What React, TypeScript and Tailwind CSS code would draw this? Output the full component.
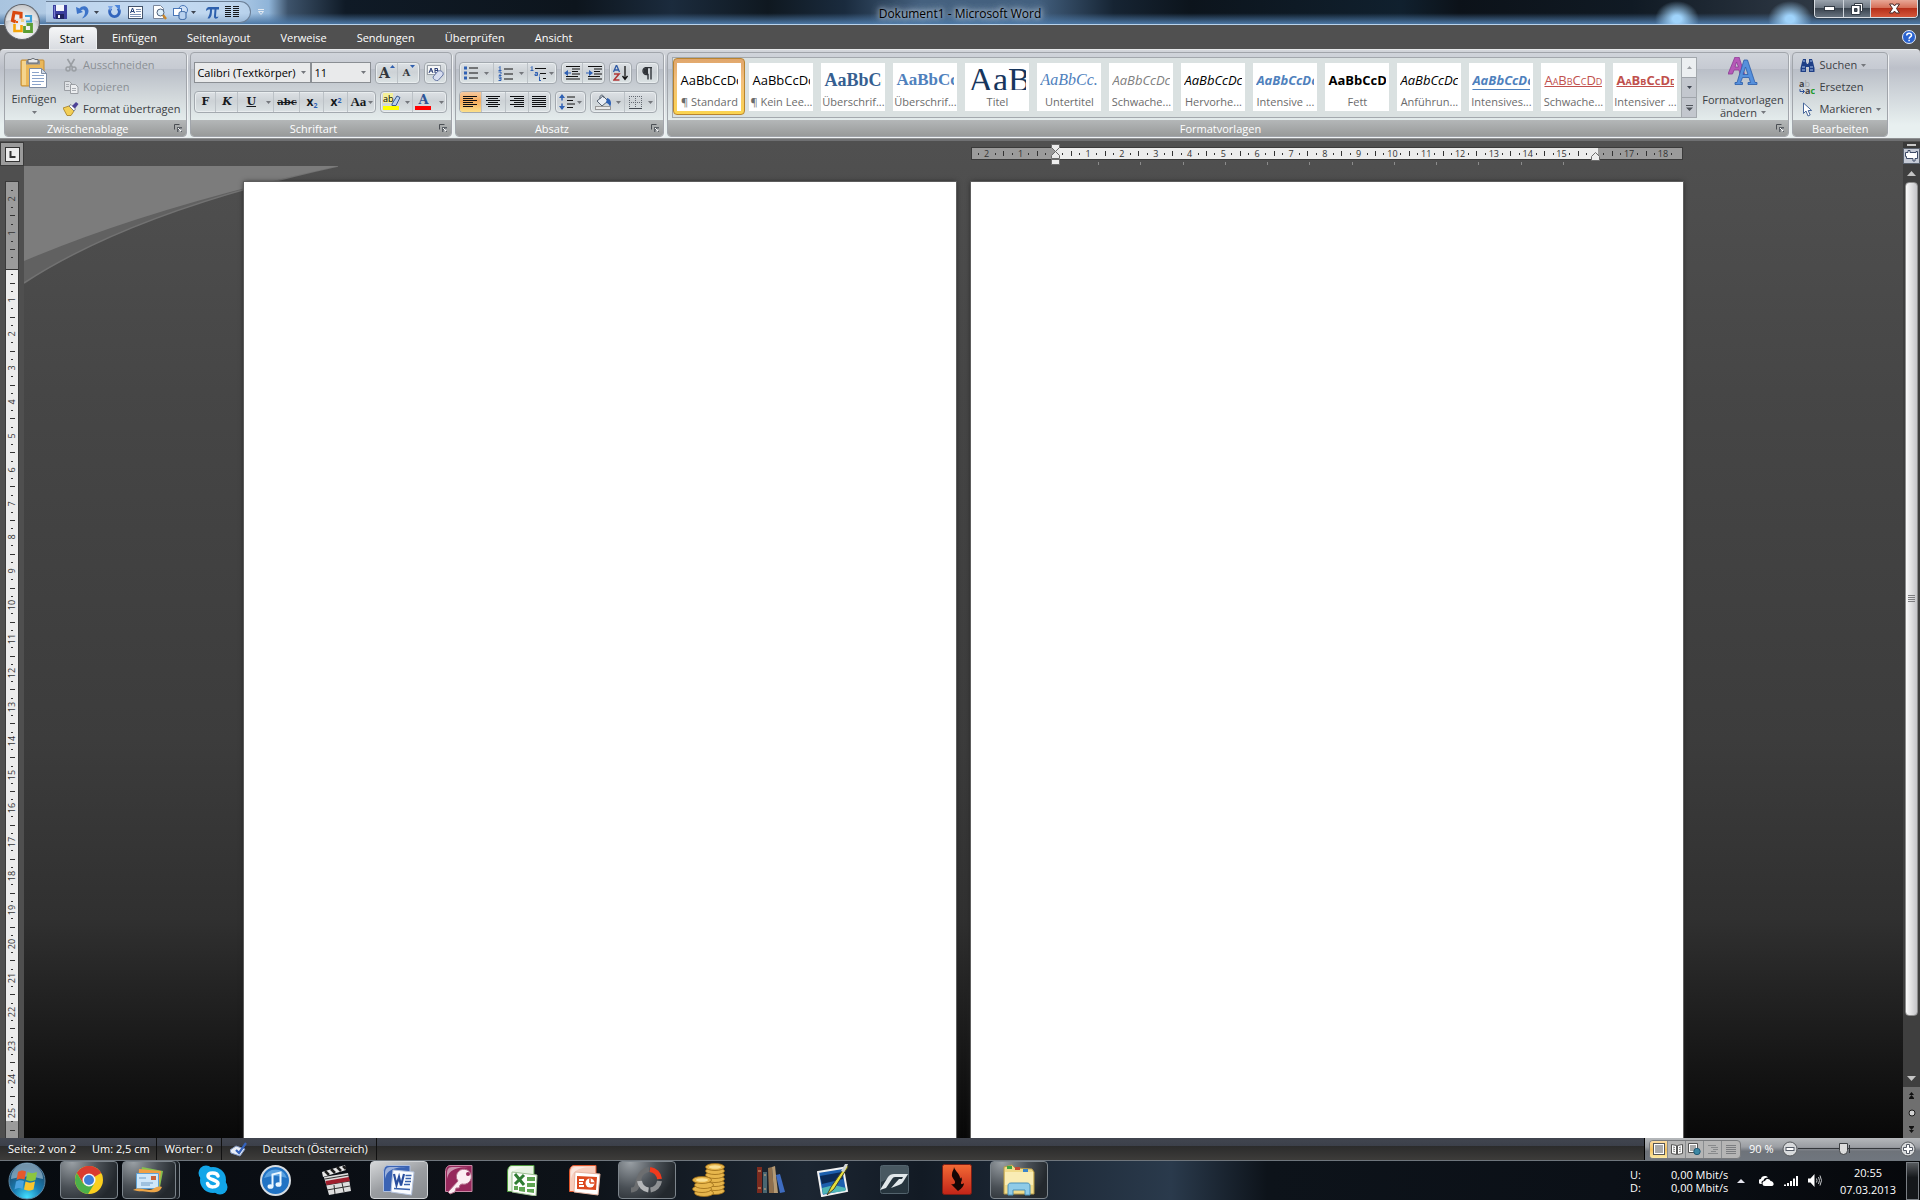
import React from 'react';

const SERIF = "font-['DejaVu_Serif']";

const Svg: React.FC<{ w?: number; h?: number; vb?: string; children: React.ReactNode }> = ({
  w = 16,
  h = 16,
  vb,
  children,
}) => (
  <svg width={w} height={h} viewBox={vb ?? `0 0 ${w} ${h}`} className="block shrink-0" aria-hidden="true">
    {children}
  </svg>
);

const Caret: React.FC<{ dark?: boolean }> = ({ dark }) => (
  <Svg w={5} h={3}>
    <path d="M0 0h5L2.5 3z" fill={dark ? '#3d4450' : '#74777c'} />
  </Svg>
);

/* ---------- title bar ---------- */

const OfficeButton = () => (
  <button type="button" aria-label="Office" className="absolute left-1 top-1 z-10 h-9 w-9">
    <Svg w={36} h={36}>
      <defs>
        <radialGradient id="orb" cx="50%" cy="75%" r="70%">
          <stop offset="0" stopColor="#ffffff" />
          <stop offset="0.6" stopColor="#dcdcde" />
          <stop offset="1" stopColor="#8b8d92" />
        </radialGradient>
      </defs>
      <circle cx="18" cy="18" r="17.5" fill="url(#orb)" stroke="#5e6269" />
      <path d="M2 17a16 16 0 0 1 32 0q-16-5-32 0z" fill="#fff" opacity="0.55" />
      <g fill="none" strokeWidth="3.2">
        <path d="M17 14.500V9.500l-7-1-1.500 8 3 1.200" stroke="#d9480f" />
        <path d="M14 18h-2.500" stroke="#e8590c" strokeWidth="2" />
        <path d="M21 12h6v5.500h-5" stroke="#3f9fd8" strokeWidth="2.200" />
        <path d="M10.500 20v7h7v-6" stroke="#f5a60b" strokeWidth="2.600" />
        <path d="M20.500 22v5.500h7v-7h-5" stroke="#5a9e35" strokeWidth="2.800" />
      </g>
      <path d="M17 15h3v3h-3z" fill="#f3c04a" opacity="0.6" />
    </Svg>
  </button>
);

const SaveIcon = () => (
  <Svg w={14} h={14}>
    <path d="M0 0h14v14H1l-1-1z" fill="#3b3f9e" />
    <path d="M3 0h8v6H3z" fill="#f3f5fb" />
    <path d="M3 9h8v5H3z" fill="#20235f" />
    <path d="M5 10h2v3H5z" fill="#fff" />
    <path d="M1 1h1v11H1z" fill="#7b80d0" />
  </Svg>
);

const UndoIcon = () => (
  <Svg w={13} h={14}>
    <path d="M0 2l1 7 6-2-2-1.500c2-2 4-1 4 1.500 0 3-1.500 4.500-3 6.500 4-1.500 6.500-4 6.500-7.500C12.500 1.500 7-1 3.500 3.500z" fill="#3d74c9" />
  </Svg>
);

const RedoIcon = () => (
  <Svg w={13} h={14}>
    <path d="M3 3.500a4.800 4.800 0 1 0 7 0" fill="none" stroke="#3265bd" strokeWidth="3" />
    <path d="M6.500 0H12v6z" fill="#4d86db" />
    <path d="M0 1h5L2 6z" fill="#79a4e5" />
  </Svg>
);

const TextBoxIcon = () => (
  <Svg w={15} h={13}>
    <rect x="0.500" y="0.500" width="14" height="12" fill="#fff" stroke="#43536b" />
    <path d="M2.500 7L4.500 2l2 5M3.200 5.500h2.600" fill="none" stroke="#1f3c74" />
    <path d="M8 3.500h5M8 5.500h5M2 8.500h11M2 10.500h11" stroke="#7d92b5" />
  </Svg>
);

const PreviewIcon = () => (
  <Svg w={15} h={15}>
    <path d="M1.500.5h7l3 3v10h-10z" fill="#fff" stroke="#7a869b" />
    <circle cx="8.500" cy="7.500" r="3.500" fill="#dff0fb" stroke="#4f617d" />
    <path d="M11 10l3 4" stroke="#c9862a" strokeWidth="2.400" />
  </Svg>
);

const ShapesIcon = () => (
  <Svg w={16} h={15}>
    <circle cx="10" cy="5" r="4.500" fill="#cfe0f5" stroke="#4a77b8" />
    <rect x="0.500" y="3.500" width="8" height="7" fill="#fff" stroke="#4a77b8" />
    <path d="M6 8c0-2 7-2 7 0v5c0 2-7 2-7 0z" fill="#b9d2ef" stroke="#33609f" />
  </Svg>
);

const PiIcon = () => (
  <Svg w={13} h={13}>
    <path d="M0 4C1 1 2 1 4 1h9v2.500h-2.500L10 10c0 1.500 1.500 1 2.500.5-1 3-5 3-4.500-.5l.5-6.500H6C6 8 5.500 11 3.500 12.500H1.500C3.500 9 4 7 4 3.500 2 3.500 1.500 3.500.5 5z" fill="#2d60ad" />
  </Svg>
);

const ColumnsIcon = () => (
  <Svg w={14} h={12}>
    <path d="M0 .5h6M0 2.500h6M0 4.500h6M0 6.500h6M0 8.500h6M0 10.500h6M8 .5h6M8 2.500h6M8 4.500h6M8 6.500h6M8 8.500h6M8 10.500h6" stroke="#15181d" />
  </Svg>
);

const IconButton: React.FC<{ label: string; className?: string; children: React.ReactNode }> = ({
  label,
  className = '',
  children,
}) => (
  <button type="button" aria-label={label} title={label} className={`flex items-center justify-center ${className}`}>
    {children}
  </button>
);

const TitleBar = () => (
  <header className="relative flex h-[25px] shrink-0 items-center border-b border-[#b9d3ec] bg-[#0e1720]">
    <div className="absolute inset-0 bg-[linear-gradient(90deg,#a9c4df_0,#c3d8ef_8%,#b5cfea_12%,#8fb4d8_14%,#3d536b_15%,#0f1a26_18%,#0d151d_30%,#1b2b3d_35%,#0f1820_40%,#1a2b3e_44%,#45617f_48%,#43607f_54%,#162433_58%,#0c141c_62%,#10202e_73%,#0c1219_76%,#101a24_85%,#2a3440_93%,#3d4752_100%)]" />
    <div className="absolute inset-0 bg-[radial-gradient(ellipse_22px_18px_at_1677px_19px,#9fd3fb_20%,transparent),radial-gradient(ellipse_22px_18px_at_1790px_19px,#9fd3fb_20%,transparent),linear-gradient(180deg,transparent_55%,#4c77a4)]" />
    <OfficeButton />
    <div className="relative ml-[46px] flex h-[22px] w-[205px] items-center rounded-r-full border border-l-0 border-[#6b7f97] bg-[#c5daf1]/60 pl-[7px]">
      <IconButton label="Speichern" className="w-3.5"><SaveIcon /></IconButton>
      <IconButton label="Rückgängig" className="ml-2 w-3.5"><UndoIcon /></IconButton>
      <IconButton label="Rückgängig Liste" className="ml-0.5 w-2.5"><Caret dark /></IconButton>
      <IconButton label="Wiederholen" className="ml-1.5 w-3.5"><RedoIcon /></IconButton>
      <IconButton label="Textfeld" className="ml-1.5 w-4"><TextBoxIcon /></IconButton>
      <IconButton label="Seitenansicht" className="ml-2 w-4"><PreviewIcon /></IconButton>
      <IconButton label="Formen" className="ml-1.5 w-4"><ShapesIcon /></IconButton>
      <IconButton label="Formen Liste" className="w-2"><Caret dark /></IconButton>
      <IconButton label="Formel" className="ml-2 w-3.5"><PiIcon /></IconButton>
      <IconButton label="Spalten" className="ml-1.5 w-3.5"><ColumnsIcon /></IconButton>
    </div>
    <IconButton label="Symbolleiste anpassen" className="relative ml-1.5 h-4 w-2">
      <Svg w={6} h={6}>
        <path d="M0 .5h6M.5 2.500h5L3 5.500z" stroke="#e4eaf1" fill="none" />
      </Svg>
    </IconButton>
    <h1 className="pointer-events-none absolute inset-x-0 top-1 text-center text-[12px] leading-5 text-black [text-shadow:0_0_4px_#c5d3e2,0_0_8px_#b5c6d8,0_0_8px_#b5c6d8]">
      Dokument1 - Microsoft Word
    </h1>
    <div className="absolute right-0.5 top-0 flex h-[18px] overflow-hidden rounded-b border border-t-0 border-[#d8dde3] shadow-[0_0_2px_#000]">
      <IconButton label="Minimieren" className="w-[29px] border-r border-[#cfd5dc] bg-[linear-gradient(180deg,#9aa3ad,#6b7580_50%,#3a444f_50%,#67727e)]">
        <Svg w={11} h={5}><rect x="0.500" y="0.500" width="10" height="4" fill="#fff" stroke="#333b45" /></Svg>
      </IconButton>
      <IconButton label="Verkleinern" className="w-[27px] border-r border-[#cfd5dc] bg-[linear-gradient(180deg,#9aa3ad,#6b7580_50%,#3a444f_50%,#67727e)]">
        <Svg w={12} h={12}>
          <path d="M3.500.5h8v8h-2v-6h-6z" fill="#fff" stroke="#333b45" />
          <path d="M.5 2.500h8.500v9H.5zM3.500 5.500v3h2.500v-3z" fillRule="evenodd" fill="#fff" stroke="#333b45" />
        </Svg>
      </IconButton>
      <IconButton label="Schließen" className="w-[46px] bg-[linear-gradient(180deg,#e8a796,#d46a52_50%,#b7301a_50%,#d4573a)]">
        <Svg w={11} h={11}>
          <path d="M.5 1h3.500l1.500 2L7 1h3.500L7.500 5.500l3 4.500H7L5.500 8 4 10H.5l3-4.500z" fill="#fff" stroke="#4d2a28" />
        </Svg>
      </IconButton>
    </div>
  </header>
);

/* ---------- ribbon ---------- */

const TABS = ['Start', 'Einfügen', 'Seitenlayout', 'Verweise', 'Sendungen', 'Überprüfen', 'Ansicht'];

const TabRow = () => (
  <nav className="flex h-6 shrink-0 items-end bg-[#505050] pl-[49px]">
    {TABS.map((tab, i) => (
      <button
        key={tab}
        type="button"
        className={
          i === 0
            ? 'h-[22px] w-12 rounded-t border border-b-0 border-[#eef1f3] bg-[linear-gradient(180deg,#f4f5f6,#d9dce1)] pr-0.5 text-[11px] leading-[22px] text-black'
            : 'h-[22px] px-[15px] text-[11px] leading-[22px] text-white'
        }
      >
        {tab}
      </button>
    ))}
    <IconButton label="Hilfe" className="mb-[5px] ml-auto mr-1">
      <Svg w={14} h={14}>
        <circle cx="7" cy="7" r="6.500" fill="#2a62cf" stroke="#e3ecfa" />
        <path d="M4.700 5.500c0-3 4.800-3 4.800-.3 0 1.700-2.400 1.800-2.400 3.500M7.100 9.800v1.400" fill="none" stroke="#fff" strokeWidth="1.500" />
      </Svg>
    </IconButton>
  </nav>
);

const Group: React.FC<{ title: string; launcher?: boolean; className?: string; children: React.ReactNode }> = ({
  title,
  launcher = true,
  className = '',
  children,
}) => (
  <section className="flex h-[85px] flex-col overflow-hidden rounded border border-[#a1a5ab] bg-[linear-gradient(180deg,#d0d4da_0,#c6cad2_16px,#b9bec7_16px,#d3d9dc_45px,#e6eeee_70px)] shadow-[1px_1px_0_#f0f2f4]">
    <div className={`flex flex-1 ${className}`}>{children}</div>
    <div className="relative h-4 bg-[linear-gradient(180deg,#b4b7b8,#989a9a)] text-center text-[11px] leading-[18px] text-white">
      <h2 className={launcher ? 'pr-4' : ''}>{title}</h2>
      {launcher && (
        <IconButton label={`${title} Optionen`} className="absolute right-1 top-1">
          <Svg w={8} h={8}>
            <path d="M.5 5.500v-5h5" fill="none" stroke="#4b4f54" />
            <path d="M3 3h5v5H3z" fill="#5b6066" />
            <path d="M4 4l3 3M7 4.500v2.500H4.500" stroke="#fff" fill="none" />
          </Svg>
        </IconButton>
      )}
    </div>
  </section>
);

const Cluster: React.FC<{ children: React.ReactNode }> = ({ children }) => (
  <div className="flex h-[22px] divide-x divide-[#bcc2c7] overflow-hidden rounded-sm border border-[#a3a9af] bg-[linear-gradient(180deg,#dde1e5,#cdd2d6_45%,#dbe2e4)] shadow-[inset_0_0_0_1px_#e9edef]">
    {children}
  </div>
);

const SmallButton: React.FC<{ icon: React.ReactNode; label: string; disabled?: boolean; caret?: boolean }> = ({
  icon,
  label,
  disabled,
  caret,
}) => (
  <button
    type="button"
    disabled={disabled}
    className={`flex h-[22px] items-center text-[11px] leading-4 ${disabled ? 'text-[#8b9095]' : 'text-[#3c4044]'}`}
  >
    <span className="mr-1 flex w-4 justify-center">{icon}</span>
    {label}
    {caret && <span className="ml-1"><Caret /></span>}
  </button>
);

const PasteIcon = () => (
  <Svg w={28} h={32}>
    <rect x="1" y="3" width="23" height="26" rx="1" fill="#eab759" stroke="#c38b32" />
    <path d="M2 4h4v24H2z" fill="#f5d48d" />
    <path d="M6 3.500h14v4H6z" fill="#8d9299" />
    <path d="M8 2.500h3a2.500 2.500 0 0 1 4 0h3v3.500H8z" fill="#e8eaed" stroke="#666b72" />
    <path d="M9.500 11.500h12l5 5v14h-17z" fill="#fff" stroke="#7f8da3" />
    <path d="M21.500 11.500v5h5z" fill="#cfd9e8" stroke="#7f8da3" />
    <path d="M12 15.500h7M12 18.500h12M12 21.500h12M12 24.500h12M12 27.500h9" stroke="#8aa3ca" />
  </Svg>
);

const CutIcon = () => (
  <Svg w={12} h={14}>
    <path d="M2.500 1l5 8.500M9.500 1l-5 8.500" stroke="#9a9ea3" strokeWidth="1.600" />
    <circle cx="3" cy="11" r="2" fill="none" stroke="#9a9ea3" strokeWidth="1.500" />
    <circle cx="9" cy="11" r="2" fill="none" stroke="#9a9ea3" strokeWidth="1.500" />
  </Svg>
);

const CopyIcon = () => (
  <Svg w={15} h={13}>
    <path d="M.5.5h5l2.500 2.500v6.500H.5z" fill="#dfe2e5" stroke="#9a9ea3" />
    <path d="M6.500 3.500h5l2.500 2.500v6.500H6.500z" fill="#eceef0" stroke="#9a9ea3" />
    <path d="M2 3.500h3M2 5.500h3M8 7.500h4M8 9.500h4" stroke="#a9adb2" />
  </Svg>
);

const BrushIcon = () => (
  <Svg w={16} h={14}>
    <path d="M0 6l6-2 5 5-3 4.500H4z" fill="#f2cf57" stroke="#a47d20" strokeWidth="0.800" />
    <path d="M6 4l2-1.500 4.500 4.500L11 9z" fill="#fff" stroke="#6c717a" strokeWidth="0.800" />
    <path d="M9 4l4-4 2.500 2L12 6.500z" fill="#4d4296" />
  </Svg>
);

const FONT_LIST = ['Calibri (Textkörper)', 'Cambria', 'Arial'];
const SIZE_LIST = ['11', '12', '14'];

const Combo: React.FC<{ id: string; label: string; options: string[]; width: string }> = ({ id, label, options, width }) => (
  <div className={`relative h-[21px] border border-[#8a8e93] bg-[#e9eaeb] ${width}`}>
    <label htmlFor={id} className="sr-only">{label}</label>
    <select id={id} className="block h-full w-full appearance-none bg-transparent pl-0.5 text-[11px] leading-4 text-black outline-none">
      {options.map(o => (
        <option key={o}>{o}</option>
      ))}
    </select>
    <span className="pointer-events-none absolute right-1 top-2"><Caret /></span>
  </div>
);

const GrowFont: React.FC<{ down?: boolean }> = ({ down }) => (
  <span className={`flex items-start font-bold text-[#33373d] ${SERIF} ${down ? 'text-[10px] leading-4' : 'text-[14px] leading-4'}`}>
    A
    <Svg w={5} h={4}><path d={down ? 'M0 0h5L2.500 3z' : 'M0 3h5L2.500 0z'} fill="#2f5fae" /></Svg>
  </span>
);

const ClearIcon = () => (
  <Svg w={17} h={16}>
    <rect x="0.500" y="0.500" width="13" height="9" fill="#f6f7f8" stroke="#9ba1a8" />
    <path d="M2 8l2-5 2 5M3 6h2.500M8 3v5M8 3.500h2.500v2H8h3v2.500H8" fill="none" stroke="#2c3f77" />
    <path d="M6 12l5-6c3-1 6 1 5 4l-5 5.500c-2 .5-5-1-5-3.500z" fill="#d8def0" stroke="#6575a4" />
  </Svg>
);

const HighlightIcon = () => (
  <Svg w={18} h={18}>
    <path d="M0 0h10v10H0z" fill="#f4f09a" />
    <path d="M0 13h16v4H0z" fill="#ffff00" />
    <path d="M9 11l5-8 3 1.500-4 8H9z" fill="#b8d0ee" stroke="#3b5a91" />
    <text x="0" y="9" fontSize="9" fontFamily="Open Sans" fill="#000">ab</text>
  </Svg>
);

const Lines: React.FC<{ rows: [number, number][] }> = ({ rows }) => (
  <Svg w={15} h={12}>
    {rows.map(([x, len], i) => (
      <path key={i} d={`M${x} ${i * 2 + 0.5}h${len}`} stroke="#0d0f12" />
    ))}
  </Svg>
);

const LEFT: [number, number][] = [[0, 14], [0, 10], [0, 14], [0, 10], [0, 14], [0, 10]];
const CENTER: [number, number][] = [[0, 14], [2, 10], [0, 14], [2, 10], [0, 14], [2, 10]];
const RIGHT: [number, number][] = [[0, 14], [4, 10], [0, 14], [4, 10], [0, 14], [4, 10]];
const FULL: [number, number][] = [[0, 14], [0, 14], [0, 14], [0, 14], [0, 14], [0, 14]];

const BulletsIcon = () => (
  <Svg w={14} h={14}>
    <path d="M0 .5h3v3H0zM0 5.500h3v3H0zM0 10.500h3v3H0z" fill="#2f61b4" />
    <path d="M5 2h9M5 7h9M5 12h9" stroke="#111" />
  </Svg>
);

const NumbersIcon = () => (
  <Svg w={15} h={15}>
    <path d="M1 1.500l1-1v4M.5 4.500h3M.5 6h2.500v1.500l-2 2h2.500M.5 11h2.500v3.500h-2.500M1 12.700h2" fill="none" stroke="#2f61b4" />
    <path d="M6 3h9M6 8h9M6 13h9" stroke="#111" />
  </Svg>
);

const MultiIcon = () => (
  <Svg w={17} h={15}>
    <path d="M1 1.500l1-1v4M.5 4.500h3M5 6.500h2.500v3H5v-1.500h2M9.500 10.500v4M9 14.500h2M9.500 8.500v1" fill="none" stroke="#2f61b4" />
    <path d="M5 2.500h11M10 7.500h6M13 12.500h3" stroke="#111" />
  </Svg>
);

const IndentIcon: React.FC<{ right?: boolean }> = ({ right }) => (
  <Svg w={16} h={14}>
    <path d="M2 .5h14M8 3h8M8 5.500h6M8 8h8M2 10.500h12M2 13h14" stroke="#111" />
    <path d={right ? 'M0 6.500h3V4l4 3-4 3V7.500H0z' : 'M7 6.500H4V4L0 7l4 3V7.500h3z'} fill="#2f61b4" />
  </Svg>
);

const SortIcon = () => (
  <Svg w={15} h={16}>
    <path d="M.5 7L3.500 0l3 7M1.500 5h4" fill="none" stroke="#2f5aa5" strokeWidth="1.300" />
    <path d="M1 9h5l-5 6h5.500" fill="none" stroke="#b03636" strokeWidth="1.600" />
    <path d="M12 1v13M9.500 11l2.500 3.500 2.500-3.500" fill="none" stroke="#111" strokeWidth="1.300" />
  </Svg>
);

const PilcrowIcon = () => (
  <Svg w={11} h={13}>
    <path d="M10 .5H4.500a3.500 3.500 0 0 0 0 7H6V12.500M9 .5v12" fill="none" stroke="#2f3338" strokeWidth="1.400" />
    <path d="M6 1H4.500a3 3 0 0 0 0 6H6z" fill="#2f3338" />
  </Svg>
);

const SpacingIcon = () => (
  <Svg w={16} h={16}>
    <path d="M3 1v5.500M3 15V9.500" stroke="#2f61b4" strokeWidth="1.500" />
    <path d="M0 4l3-4 3 4zM0 12l3 4 3-4z" fill="#2f61b4" />
    <path d="M8 3h8M8 6.500h6M8 10h8M8 13.500h6" stroke="#111" />
  </Svg>
);

const BucketIcon = () => (
  <Svg w={17} h={16}>
    <path d="M2 7l6-5 5 5-6 5z" fill="#e9eef5" stroke="#55606f" />
    <path d="M5 5C4 0 9 0 9 4" fill="none" stroke="#55606f" />
    <path d="M12 4c4 1 5 5 3 9-1-3-2-4-4-4z" fill="#2f61b4" />
    <rect x="0.500" y="12.500" width="15" height="3" fill="#e9e9e9" stroke="#999" />
  </Svg>
);

const BordersIcon = () => (
  <Svg w={13} h={13}>
    <path d="M.5 0v13M12.500 0v12M6.500 0v12M0 .5h13M0 6.500h13" stroke="#646a72" strokeDasharray="1 1" />
    <path d="M0 12.500h13" stroke="#444a52" />
  </Svg>
);

const CALIBRI = "text-[13px] leading-4 font-['Open_Sans']";

const STYLES: { name: string; sample: string; look: string }[] = [
  { name: '¶ Standard', sample: 'AaBbCcDc', look: `${CALIBRI} text-black` },
  { name: '¶ Kein Lee...', sample: 'AaBbCcDc', look: `${CALIBRI} text-black` },
  { name: 'Überschrif...', sample: 'AaBbCc', look: "text-[18px] leading-4 font-bold text-[#365f91] font-['Liberation_Serif']" },
  { name: 'Überschrif...', sample: 'AaBbCc', look: "text-[17px] leading-4 font-bold text-[#4f81bd] font-['Liberation_Serif']" },
  { name: 'Titel', sample: 'AaB', look: "text-[34px] leading-4 text-[#17365d] font-['Liberation_Serif']" },
  { name: 'Untertitel', sample: 'AaBbCc.', look: "text-[16px] leading-4 italic text-[#4f81bd] font-['Liberation_Serif']" },
  { name: 'Schwache...', sample: 'AaBbCcDc', look: `${CALIBRI} italic text-[#808080]` },
  { name: 'Hervorhe...', sample: 'AaBbCcDc', look: `${CALIBRI} italic text-black` },
  { name: 'Intensive ...', sample: 'AaBbCcDc', look: `${CALIBRI} italic font-bold text-[#4f81bd]` },
  { name: 'Fett', sample: 'AaBbCcDc', look: `${CALIBRI} font-bold text-black` },
  { name: 'Anführun...', sample: 'AaBbCcDc', look: `${CALIBRI} italic text-black` },
  { name: 'Intensives...', sample: 'AaBbCcDc', look: `${CALIBRI} italic font-bold text-[#4f81bd] underline underline-offset-4` },
  { name: 'Schwache...', sample: 'AaBbCcDd', look: `${CALIBRI} [font-variant:small-caps] text-[#c0504d] underline` },
  { name: 'Intensiver ...', sample: 'AaBbCcDd', look: `${CALIBRI} [font-variant:small-caps] font-bold text-[#c0504d] underline` },
];

const Gallery = () => (
  <div className="mt-1 flex h-[61px] border border-[#a3a8ad] bg-[#dae1e1]">
    {STYLES.map((s, i) => (
      <button
        key={i}
        type="button"
        className={`flex h-[57px] w-[72px] items-center justify-center ${
          i === 0 ? 'rounded-sm border border-[#b9842f] bg-[linear-gradient(180deg,#e0a66c,#f3c07c_40%,#fbd44f)]' : ''
        }`}
      >
        <span className="flex h-12 w-16 flex-col bg-white pt-[3px]">
          <span className="mx-[3px] flex h-6 items-end overflow-hidden pb-0.5">
            <span className={`block whitespace-nowrap ${s.look}`}>{s.sample}</span>
          </span>
          <span className="mt-1 whitespace-nowrap text-center text-[11px] leading-4 text-[#6b6b6b]">{s.name}</span>
        </span>
      </button>
    ))}
    <div className="flex w-[15px] flex-col divide-y divide-[#9fa4aa] border-l border-[#a3a8ad] bg-[linear-gradient(180deg,#eceff1_33%,#c3c7ce_33%)]">
      <IconButton label="Nach oben" className="flex-1"><Svg w={5} h={3}><path d="M0 3h5L2.500 0z" fill="#9b9ea3" /></Svg></IconButton>
      <IconButton label="Nach unten" className="flex-1"><Caret dark /></IconButton>
      <IconButton label="Weitere" className="flex-1">
        <Svg w={7} h={6}><path d="M0 0h7v1H0zM0 2.500h7L3.500 6z" fill="#4f545b" /></Svg>
      </IconButton>
    </div>
  </div>
);

const ChangeStylesIcon = () => (
  <Svg w={30} h={28}>
    <path d="M7 0h4l5.500 17H12l-1-4H6l-1.500 4H0zM8.500 5L7 10h3.500z" fill="#b659b8" stroke="#8a3c93" strokeWidth="0.800" />
    <path d="M16 3h3.500L27 25.500h2V27.500H20V25.500h2.500L21 20.500h-6.500L12.500 25.500h2V27.500H7V25.500h2zM17.500 10l-2.500 7.500h5z" fill="#5690dc" stroke="#2a5ca8" strokeWidth="0.800" />
  </Svg>
);

const SearchIcon = () => (
  <Svg w={15} h={13}>
    <path d="M2 3l1-3h3v3l1 2h1l1-2V0h3l1 3 1.500 6v4H9V8H6v5H.5V9z" fill="#1f3f86" />
    <path d="M2 8h3M10 8h3M3 2h2M10 2h2M2 11h3M10 11h3" stroke="#a9c3ec" />
  </Svg>
);

const ReplaceIcon = () => (
  <Svg w={16} h={15}>
    <text x="0" y="7" fontSize="9" fontWeight="700" fontFamily="Open Sans" fill="#3f4347">
      a<tspan fontWeight="400" fill="#a0a4a8">b</tspan>
    </text>
    <text x="6" y="14" fontSize="9" fontWeight="700" fontFamily="Open Sans" fill="#3f4347">
      a<tspan fill="#1e9a2b">c</tspan>
    </text>
    <path d="M1 9v2.500h4M3.500 9.500l2 2-2 2" fill="none" stroke="#2b4f96" />
  </Svg>
);

const PointerIcon = () => (
  <Svg w={11} h={15}>
    <path d="M1.500 1v10.500l2.500-2.500 2 5 2.200-1-2-4.500h3.500z" fill="#fff" stroke="#47679b" />
  </Svg>
);

const Ribbon = () => (
  <div className="shrink-0 rounded-t border-t border-[#e6e8ea] bg-[linear-gradient(180deg,#d3d6db,#bcc0c9_18px,#e8f0f0_75px)] shadow-[0_1px_0_#8e9092,0_3px_0_#6f7072]">
    <div className="flex h-[88px] items-start gap-[3px] pl-1 pt-0.5">
      <Group title="Zwischenablage" className="pl-[3px] pr-1.5">
        <button type="button" className="mr-[3px] mt-1 flex w-[52px] flex-col items-center text-[11px] leading-4 text-[#3c4044]">
          <PasteIcon />
          <span className="mt-0.5">Einfügen</span>
          <span className="mt-1"><Caret /></span>
        </button>
        <div className="flex flex-col pt-px">
          <SmallButton icon={<CutIcon />} label="Ausschneiden" disabled />
          <SmallButton icon={<CopyIcon />} label="Kopieren" disabled />
          <SmallButton icon={<BrushIcon />} label="Format übertragen" />
        </div>
      </Group>

      <Group title="Schriftart" className="flex-col gap-[7px] pl-[3px] pr-1 pt-[9px]">
        <div className="flex gap-1">
          <div className="flex">
            <Combo id="font" label="Schriftart" options={FONT_LIST} width="w-[117px]" />
            <Combo id="size" label="Schriftgrad" options={SIZE_LIST} width="w-[60px]" />
          </div>
          <Cluster>
            <IconButton label="Schriftart vergrößern" className="w-[22px]"><GrowFont /></IconButton>
            <IconButton label="Schriftart verkleinern" className="w-[21px]"><GrowFont down /></IconButton>
          </Cluster>
          <Cluster>
            <IconButton label="Formatierung löschen" className="w-[21px]"><ClearIcon /></IconButton>
          </Cluster>
        </div>
        <div className={`flex gap-1 text-[11px] leading-5 text-[#16191d] ${SERIF}`}>
          <Cluster>
            <button type="button" className="w-[21px] font-bold">F</button>
            <button type="button" className="w-[22px] font-bold italic">K</button>
            <button type="button" className="flex w-9 items-center gap-2.5 pl-2">
              <span className="font-bold underline">U</span><Caret />
            </button>
            <button type="button" className="w-[26px] text-[10px] font-bold line-through">abc</button>
            <button type="button" className="w-6 text-[12px] font-bold font-['Open_Sans']">x<sub className="text-[7px] text-[#2f61b4]">2</sub></button>
            <button type="button" className="w-6 text-[12px] font-bold font-['Open_Sans']">x<sup className="text-[7px] text-[#2f61b4]">2</sup></button>
            <button type="button" className="flex w-[27px] items-center justify-center gap-0.5 font-['Liberation_Serif'] text-[13px] font-bold">
              Aa<Caret />
            </button>
          </Cluster>
          <Cluster>
            <button type="button" aria-label="Hervorheben" className="flex w-8 items-center justify-center gap-1"><HighlightIcon /><Caret /></button>
            <button type="button" className="flex w-[33px] items-center justify-center gap-2">
              <span className="flex h-4 w-4 justify-center border-b-4 border-[#ff0000] text-[13px] font-bold leading-3 text-[#2f5597]">A</span>
              <Caret />
            </button>
          </Cluster>
        </div>
      </Group>

      <Group title="Absatz" className="flex-col gap-[7px] pl-[3px] pr-1 pt-[9px]">
        <div className="flex gap-1">
          <Cluster>
            <button type="button" aria-label="Aufzählung" className="flex w-[34px] items-center justify-center gap-1.5"><BulletsIcon /><Caret /></button>
            <button type="button" aria-label="Nummerierung" className="flex w-[34px] items-center justify-center gap-1.5"><NumbersIcon /><Caret /></button>
            <button type="button" aria-label="Liste mit mehreren Ebenen" className="flex w-[28px] items-center justify-center gap-0.5"><MultiIcon /><Caret /></button>
          </Cluster>
          <Cluster>
            <IconButton label="Einzug verkleinern" className="w-[21px]"><IndentIcon /></IconButton>
            <IconButton label="Einzug vergrößern" className="w-[21px]"><IndentIcon right /></IconButton>
          </Cluster>
          <Cluster>
            <IconButton label="Sortieren" className="w-[21px]"><SortIcon /></IconButton>
          </Cluster>
          <Cluster>
            <IconButton label="Absatzmarken" className="w-[21px]"><PilcrowIcon /></IconButton>
          </Cluster>
        </div>
        <div className="flex gap-1">
          <Cluster>
            <IconButton label="Linksbündig" className="w-[22px] bg-[linear-gradient(180deg,#f5c9a0,#f5ab5c_45%,#fbe08a)]"><Lines rows={LEFT} /></IconButton>
            <IconButton label="Zentriert" className="w-6"><Lines rows={CENTER} /></IconButton>
            <IconButton label="Rechtsbündig" className="w-[23px]"><Lines rows={RIGHT} /></IconButton>
            <IconButton label="Blocksatz" className="w-[21px]"><Lines rows={FULL} /></IconButton>
          </Cluster>
          <Cluster>
            <button type="button" aria-label="Zeilenabstand" className="flex w-[29px] items-center justify-center gap-0.5"><SpacingIcon /><Caret /></button>
          </Cluster>
          <Cluster>
            <button type="button" aria-label="Schattierung" className="flex w-[34px] items-center justify-center gap-1"><BucketIcon /><Caret /></button>
            <button type="button" aria-label="Rahmen" className="flex w-[31px] items-center justify-center gap-1.5"><BordersIcon /><Caret /></button>
          </Cluster>
        </div>
      </Group>

      <Group title="Formatvorlagen" className="gap-1 px-1">
        <Gallery />
        <button type="button" className="mt-1 flex w-[83px] flex-col items-center text-[11px] leading-[13px] text-[#3c4044]">
          <ChangeStylesIcon />
          <span className="mt-2">Formatvorlagen</span>
          <span className="flex items-center gap-1">ändern <Caret /></span>
        </button>
      </Group>

      <Group title="Bearbeiten" launcher={false} className="flex-col pl-1.5 pr-1.5 pt-px">
        <SmallButton icon={<SearchIcon />} label="Suchen" caret />
        <SmallButton icon={<ReplaceIcon />} label="Ersetzen" />
        <SmallButton icon={<PointerIcon />} label="Markieren" caret />
      </Group>
    </div>
  </div>
);

/* ---------- rulers and document ---------- */

// one mark per quarter centimetre, zero sits 2.5 cm inside the sheet
const marks = (count: number) => Array.from({ length: count }, (_, i) => i + 1 - 10);

const HorizontalRuler = () => (
  <div className="relative flex h-[13px] w-[712px] items-center border border-[#3a3a3a] bg-[linear-gradient(90deg,#9b9b9b_84px,#ececec_84px,#ececec_626px,#9b9b9b_626px)] pl-0.5 pr-1.5 text-[9px] leading-3 text-[#333]">
    {marks(83).map(m => (
      <span key={m} className="flex w-0 flex-1 justify-center">
        {m === 0 || m === 64 ? '' : m % 4 === 0 ? (
          <span>{Math.abs(m / 4)}</span>
        ) : m % 2 === 0 ? (
          <span className="h-[5px] w-px bg-[#333]" />
        ) : (
          <span className="h-0.5 w-px bg-[#333]" />
        )}
      </span>
    ))}
    <span className="absolute -top-1 left-[79px]">
      <Svg w={10} h={22}>
        <path d="M.5.5h8v3l-4 4-4-4zM.5 14.500v-3l4-4 4 4v3zM.5 15.500h8v5h-8z" fill="#ededed" stroke="#6c6c6c" />
      </Svg>
    </span>
    <span className="absolute left-[619px] top-1">
      <Svg w={10} h={9}><path d="M.5 8.500v-4l4-4 4 4v4z" fill="#ededed" stroke="#6c6c6c" /></Svg>
    </span>
    <div className="absolute left-[84px] top-3.5 flex w-[508px] justify-between pl-[42px]">
      {Array.from({ length: 12 }, (_, i) => (
        <span key={i} className="h-[3px] w-px bg-[#8b8b8b]" />
      ))}
    </div>
  </div>
);

const VerticalRuler = () => (
  <div className="ml-[5px] mt-[15px] h-[1007px] w-3.5 border border-[#3a3a3a] bg-[linear-gradient(180deg,#9b9b9b_87px,#333_87px,#333_88px,#ececec_88px,#ececec_939px,#9b9b9b_939px)] pt-1">
    <div className="flex h-[1000px] flex-col text-[9px] leading-3 text-[#333]">
      {marks(118).map(m => (
        <span key={m} className="flex h-0 flex-1 items-center justify-center">
          {m === 0 ? '' : m % 4 === 0 ? (
            <span className="-rotate-90">{Math.abs(m / 4)}</span>
          ) : m % 2 === 0 ? (
            <span className="h-px w-[5px] bg-[#333]" />
          ) : (
            <span className="h-px w-0.5 bg-[#333]" />
          )}
        </span>
      ))}
    </div>
  </div>
);

const Swoosh = () => (
  <svg width="316" height="120" viewBox="0 0 316 120" className="absolute left-0 top-0" aria-hidden="true">
    <path d="M0 0H314Q110 45 0 117z" fill="#616161" />
    <path d="M314 0Q110 45 0 117" fill="none" stroke="#727272" strokeWidth="1.500" />
    <path d="M0 0H314Q130 40 0 95z" fill="#7c7c7c" />
  </svg>
);

const Sheet = () => (
  <article className="relative h-[1007px] w-[712px] shrink-0 bg-white shadow-[0_0_0_1px_#5d5d5d,0_0_5px_#222]" />
);

const ScrollBar = () => (
  <aside className="flex w-[17px] shrink-0 flex-col bg-[#3f3f3f]">
    <div className="flex h-1.5 items-center justify-center bg-[#3a3a3a]"><span className="h-0.5 w-[9px] bg-[#c9c9c9]" /></div>
    <IconButton label="Lineal" className="h-4 border border-[#5c6470] bg-[#c6cbd6]">
      <Svg w={13} h={12}>
        <path d="M.5 2.500h2.500v-2h2v2h6v-1h1.500v7H10v2.500H8v-2.500H1.500v-2h-1z" fill="#fff" stroke="#3d4a66" />
      </Svg>
    </IconButton>
    <IconButton label="Bild auf" className="h-[18px]">
      <Svg w={9} h={5}><path d="M0 5h9L4.500 0z" fill="#c4c4c4" /></Svg>
    </IconButton>
    <div className="flex flex-1 flex-col">
      <div className="mx-0.5 flex h-[94%] items-center justify-center rounded-sm border border-[#8c8c8c] bg-[linear-gradient(90deg,#fafafa,#dcdcde_55%,#c4c4c8)]">
        <Svg w={7} h={7}><path d="M0 .5h7M0 2.500h7M0 4.500h7M0 6.500h7" stroke="#7d7d80" /></Svg>
      </div>
    </div>
    <IconButton label="Bild ab" className="h-[18px]">
      <Svg w={9} h={5}><path d="M0 0h9L4.500 5z" fill="#c4c4c4" /></Svg>
    </IconButton>
    <div className="flex h-[51px] flex-col bg-[#6f6f6f]">
      <IconButton label="Vorherige Seite" className="flex-1">
        <Svg w={5} h={7}><path d="M0 3l2.500-3L5 3zM0 6l2.500-3L5 6zM0 6h5v1H0z" fill="#111" /></Svg>
      </IconButton>
      <IconButton label="Browseobjekt" className="flex-1">
        <Svg w={8} h={8}><circle cx="4" cy="4" r="3" fill="#d2d2d2" stroke="#1c1c1c" /></Svg>
      </IconButton>
      <IconButton label="Nächste Seite" className="flex-1">
        <Svg w={5} h={7}><path d="M0 4l2.500 3L5 4zM0 1l2.500 3L5 1zM0 0h5v1H0z" fill="#111" /></Svg>
      </IconButton>
    </div>
  </aside>
);

const Workspace = () => (
  <main className="mt-1 flex min-h-0 flex-1 overflow-hidden bg-[#4f4f4f]">
    <div className="w-6 shrink-0">
      <button type="button" aria-label="Tabstopp" className="flex h-6 w-6 items-center justify-center border border-[#3b3b3b] bg-[#9b9b9b]">
        <Svg w={15} h={15}>
          <rect x="0.500" y="0.500" width="14" height="14" fill="#ededed" stroke="#333" />
          <path d="M5.500 4v6h5" fill="none" stroke="#333" strokeWidth="2" />
        </Svg>
      </button>
      <VerticalRuler />
    </div>
    <div className="flex min-w-0 flex-1 flex-col bg-[linear-gradient(180deg,#505050_0,#464646_25%,#3c3c3c_60%,#303030_78%,#080808_100%)]">
      <div className="flex h-6 shrink-0 justify-center gap-[15px] pt-[5px]">
        <div className="w-[712px]" />
        <HorizontalRuler />
      </div>
      <div className="relative flex min-h-0 flex-1 items-start justify-center gap-[15px] overflow-hidden pt-4">
        <Swoosh />
        <Sheet />
        <Sheet />
      </div>
    </div>
    <ScrollBar />
  </main>
);

/* ---------- status bar ---------- */

const ViewLines: React.FC<{ color: string }> = ({ color }) => (
  <Svg w={12} h={12}>
    <rect x="0.500" y="0.500" width="11" height="11" fill="#fff" stroke={color} />
    <path d="M2 3h8M2 5h8M2 7h8M2 9h8" stroke={color} />
  </Svg>
);

const StatusBar = () => (
  <footer className="flex h-[22px] shrink-0 bg-[linear-gradient(180deg,#41454f,#3c404a_36%,#2b2b2b_36%,#3d3c3a)] text-[11px] leading-[22px] text-white">
    <div className="flex divide-x divide-[#111]">
      <div className="flex gap-4 pl-2 pr-1.5">
        <span>Seite: 2 von 2</span>
        <span>Um: 2,5 cm</span>
      </div>
      <span className="px-2">Wörter: 0</span>
      <span className="flex items-center gap-4 px-2">
        <Svg w={17} h={15}>
          <path d="M0 8l6-4 9 3-5 7-9-3z" fill="#e8edf6" stroke="#7f94bd" />
          <path d="M6 8l3 3L16 1" fill="none" stroke="#3563bd" strokeWidth="2.200" />
        </Svg>
        Deutsch (Österreich)
      </span>
      <span />
    </div>
    <div className="ml-auto flex items-center border-l border-black bg-[linear-gradient(180deg,#b5b8bb,#9b9ea3_40%,#6e737a_60%,#70767e)] px-1">
      <div className="flex h-[19px] divide-x divide-[#8a8d90] overflow-hidden rounded-sm border border-[#77797c] bg-[#b5b5b5]">
        <IconButton label="Seitenlayout" className="w-[18px] bg-[linear-gradient(180deg,#fbdca4,#f6c35f_50%,#fbe9a6)]"><ViewLines color="#555" /></IconButton>
        <IconButton label="Vollbild-Lesemodus" className="w-[18px]">
          <Svg w={12} h={12}>
            <path d="M.5 1.500l5 1v9l-5-1zM11.500 1.500l-5 1v9l5-1z" fill="#fff" stroke="#555" />
            <path d="M2 4l2 .5M2 6l2 .5M2 8l2 .5M10 4l-2 .5M10 6l-2 .5M10 8l-2 .5" stroke="#777" />
          </Svg>
        </IconButton>
        <IconButton label="Weblayout" className="w-[18px]">
          <Svg w={13} h={12}>
            <path d="M.5.5h9v9h-9zM2 3h6M2 5h6M2 7h4" fill="#fff" stroke="#555" />
            <circle cx="9" cy="8.500" r="3.200" fill="#3b87a3" stroke="#245a75" />
          </Svg>
        </IconButton>
        <IconButton label="Gliederung" className="w-[18px]">
          <Svg w={12} h={11}><path d="M1 1.500h8M4 3.500h7M6 5.500h5M4 7.500h5M1 9.500h10" stroke="#87898b" /></Svg>
        </IconButton>
        <IconButton label="Entwurf" className="w-[18px]">
          <Svg w={12} h={11}><path d="M1 1.500h10M1 3.500h10M1 5.500h10M1 7.500h10M1 9.500h10" stroke="#7b7d80" /></Svg>
        </IconButton>
      </div>
      <button type="button" className="ml-2 w-[33px] text-left">90 %</button>
      <IconButton label="Verkleinern">
        <Svg w={16} h={16}><circle cx="8" cy="8" r="7" fill="#d8dadc" stroke="#55585c" /><rect x="4" y="6.500" width="8" height="3" fill="#fff" stroke="#555b66" /></Svg>
      </IconButton>
      <div className="relative flex h-5 w-[102px] items-center">
        <span className="absolute inset-x-0 top-[9px] h-px bg-[#34373b]" />
        <span className="absolute left-[51px] top-1.5 h-2 w-px bg-[#34373b]" />
        <label htmlFor="zoom" className="sr-only">Zoom</label>
        <input
          id="zoom"
          type="range"
          min={10}
          max={172}
          defaultValue={81}
          className="relative w-full appearance-none bg-transparent [&::-webkit-slider-thumb]:h-3 [&::-webkit-slider-thumb]:w-[9px] [&::-webkit-slider-thumb]:appearance-none [&::-webkit-slider-thumb]:rounded-b-full [&::-webkit-slider-thumb]:border [&::-webkit-slider-thumb]:border-[#3d4043] [&::-webkit-slider-thumb]:bg-[#dcdcdc]"
        />
      </div>
      <IconButton label="Vergrößern">
        <Svg w={16} h={16}><circle cx="8" cy="8" r="7" fill="#d8dadc" stroke="#55585c" /><path d="M6.500 3.500h3v3h3v3h-3v3h-3v-3h-3v-3h3z" fill="#fff" stroke="#555b66" /></Svg>
      </IconButton>
    </div>
  </footer>
);

/* ---------- taskbar ---------- */

const StartOrb = () => (
  <Svg w={38} h={38}>
    <defs>
      <radialGradient id="win" cx="50%" cy="95%" r="85%">
        <stop offset="0" stopColor="#43e0ff" />
        <stop offset="0.45" stopColor="#1a7fb5" />
        <stop offset="1" stopColor="#1c4566" />
      </radialGradient>
    </defs>
    <circle cx="19" cy="19" r="18" fill="url(#win)" stroke="#5d87a5" />
    <path d="M3 17a16 16 0 0 1 32 0q-16-5-32 0z" fill="#b9d3e4" opacity="0.55" />
    <path d="M10 10c3-2 5-2 8-.5l-1.500 8c-3-1-5-1-8 .5z" fill="#e6592b" />
    <path d="M19.500 10c3 1.500 6 1.500 9.500 0l-1.500 8c-3 1.500-6 1.500-9.500 0z" fill="#8cc63f" />
    <path d="M8 19.500c3-1.500 5-1.500 8-.5l-1.500 8c-3-1.500-5-1-8 .5z" fill="#4aa3e0" />
    <path d="M17.500 19.500c3 1.500 6 1.500 9.500 0l-1.500 8c-3 1.500-6 1.500-9.500 0z" fill="#fbc52d" />
  </Svg>
);

const ChromeIcon = () => (
  <Svg w={28} h={28}>
    <circle cx="14" cy="14" r="14" fill="#fbcf1e" />
    <path d="M14 14L1.900 7A14 14 0 0 1 26.100 7z" fill="#da3b2f" />
    <path d="M14 7h12.100A14 14 0 0 0 1.900 7L8 17z" fill="#da3b2f" />
    <path d="M1.900 7A14 14 0 0 0 13 28l6.500-10.500L8 17.500z" fill="#4cb04a" />
    <circle cx="14" cy="14" r="6.500" fill="#f5f5f5" />
    <circle cx="14" cy="14" r="5" fill="#3f7fd6" />
  </Svg>
);

const MailIcon = () => (
  <Svg w={32} h={28}>
    <path d="M9 1l21 4-3 16-21-4z" fill="#86bf4d" />
    <path d="M6 3l22 2-2 16-21-2z" fill="#f0a044" />
    <path d="M3.500 7.500h22v15h-22z" fill="#cfe8fa" stroke="#5fa3d6" />
    <rect x="18" y="10" width="5" height="4" fill="#c9643c" />
    <path d="M6 12h7M8 17h12M8 19h9" stroke="#6e9cc4" />
    <path d="M0 24c8-4 14 2 20-1 3-2 5-3 9-2-2 5-7 6-13 5-6-1-10 0-16-2z" fill="#eca548" />
  </Svg>
);

const SkypeIcon = () => (
  <Svg w={32} h={32}>
    <circle cx="16" cy="16" r="13" fill="#12a5e8" />
    <circle cx="9" cy="9" r="7.500" fill="#12a5e8" />
    <circle cx="23" cy="23" r="7.500" fill="#12a5e8" />
    <path d="M21 12c-1-4-10-4-10 0s10 3.500 10 7.500-9 5-10.500 0" fill="none" stroke="#fff" strokeWidth="3.500" strokeLinecap="round" />
  </Svg>
);

const ItunesIcon = () => (
  <Svg w={31} h={31}>
    <circle cx="15.500" cy="15.500" r="14.500" fill="#2173c4" stroke="#d7dde2" strokeWidth="2" />
    <path d="M4 13a12 12 0 0 1 23 0q-12-4-23 0z" fill="#7fc0f3" opacity="0.6" />
    <path d="M12.500 21V9.500l8-2V19" fill="none" stroke="#e9f6ff" strokeWidth="2" />
    <ellipse cx="10.500" cy="21.500" rx="3" ry="2.300" fill="#e9f6ff" />
    <ellipse cx="18.500" cy="19.500" rx="3" ry="2.300" fill="#e9f6ff" />
  </Svg>
);

const ClapperIcon = () => (
  <Svg w={30} h={30}>
    <path d="M0 7L23 0l1 5L1 12z" fill="#e8e8e8" />
    <path d="M3 6l4 4M9 4l4 4M15 2l4 4M21 1l3 3" stroke="#1c1c1c" strokeWidth="2.500" />
    <path d="M2 12l24-4 3 18-22 4z" fill="#dedede" />
    <path d="M3 14l24-4M4 20l24-4M5 25l23-4M12 20l1 9M20 18l2 9" stroke="#333" />
    <path d="M3.500 16l23.500-4 .8 4-23.500 4z" fill="#a01e2d" />
  </Svg>
);

const OfficeApp: React.FC<{ edge: string; fill: string; children: React.ReactNode }> = ({ edge, fill, children }) => (
  <Svg w={32} h={31}>
    <path d="M5 .5h22v26H.5V7c0-4 2-6.500 4.500-6.500z" fill={fill} stroke={edge} />
    <path d="M2 14C4 5 10 2 26 2H7C3 2 2 5 2 9z" fill="#fff" opacity="0.5" />
    {children}
  </Svg>
);

const WordIcon = () => (
  <OfficeApp edge="#aebfdf" fill="#3a63b4">
    <path d="M10 5l21 2-2.500 23L8 27z" fill="#fafcff" stroke="#b7c5df" />
    <path d="M11 9l2.500 11 2.500-8 2 8.500L21 9" fill="none" stroke="#2a4f9e" strokeWidth="2.200" />
    <path d="M22.500 10.500h6M22.500 13.500h5.500M22 16.500h6M21 19.500h6M11 23.500l16 1" stroke="#3760ab" strokeWidth="1.600" />
  </OfficeApp>
);

const AccessIcon = () => (
  <OfficeApp edge="#c98aa5" fill="#96285c">
    <path d="M14 6a7.500 7.500 0 1 1 3 13l-2 1-1 3-3 0-1 4-5 2-2-2 10-11a7 7 0 0 1 1-10z" fill="#fbeef3" stroke="#b06a88" />
    <circle cx="23" cy="9" r="2" fill="#96285c" />
  </OfficeApp>
);

const ExcelIcon = () => (
  <OfficeApp edge="#4e9a3d" fill="#e6f2e1">
    <path d="M5 7l25 3-1 21-24-4z" fill="#fdfefc" stroke="#9cc191" />
    <path d="M20 12h8v4h-8zM20 18h8v4h-8zM20 24h7v4l-7-1zM12 22h6v5l-6-1zM7 21h4v4H7z" fill="#5fa552" />
    <path d="M8 9l9 11M17 10L8 19" stroke="#2f7d32" strokeWidth="3" />
  </OfficeApp>
);

const PowerPointIcon = () => (
  <OfficeApp edge="#e0552a" fill="#f7cdbd">
    <path d="M6 7l25 2-2 21-24-3z" fill="#fff" stroke="#e7b4a2" />
    <path d="M8 11l20 1-1 13-19-1z" fill="#dd4a20" />
    <path d="M10 15h5M10 18h4M10 21h5" stroke="#fff" strokeWidth="1.800" />
    <circle cx="21" cy="18" r="4.500" fill="#fff" />
    <path d="M21 18V13.500M21 18h4.500" stroke="#dd4a20" strokeWidth="1.500" />
  </OfficeApp>
);

const RingIcon = () => (
  <Svg w={34} h={30}>
    <g fill="none" strokeWidth="5">
      <path d="M1 25c7 0 6-6 8-11A11 11 0 0 1 19 4.500" stroke="#6c6e70" />
      <path d="M20 4.500A10.500 10.500 0 0 1 29.500 14" stroke="#f03a1d" />
      <path d="M29.500 16A10.500 10.500 0 0 1 20.500 25" stroke="#8f9193" />
      <path d="M18.500 25A10.500 10.500 0 0 1 9.500 16" stroke="#b4b6b8" />
    </g>
  </Svg>
);

const CoinsIcon = () => (
  <Svg w={34} h={34}>
    <g fill="#e7b64c" stroke="#9a6b16" strokeWidth="0.800">
      {[28, 24, 20, 16, 12, 8, 4].map(y => (
        <ellipse key={y} cx="23" cy={y} rx="9.500" ry="3.500" />
      ))}
      {[30, 26, 22, 17].map((y, i) => (
        <ellipse key={y} cx={i % 2 ? 10 : 12} cy={y} rx="9.500" ry="3.500" />
      ))}
    </g>
    <ellipse cx="23" cy="4" rx="6" ry="1.800" fill="#f9df93" />
    <ellipse cx="10" cy="17" rx="6" ry="1.800" fill="#f9df93" />
  </Svg>
);

const BooksIcon = () => (
  <Svg w={30} h={28}>
    <path d="M1 1h5v26H1z" fill="#7b2b1f" />
    <path d="M7 6h4v21H7z" fill="#4a6670" />
    <path d="M12 2l4-1 2 26h-5z" fill="#8f6f4d" />
    <path d="M16 1l3-1 3 27h-4z" fill="#b59a74" />
    <path d="M20 9l4-1 5 18-5 1z" fill="#3e6cc0" />
    <path d="M2 5h3M2 22h3M8 9h2M8 23h2" stroke="#d9a77a" />
  </Svg>
);

const PictureIcon = () => (
  <Svg w={32} h={34}>
    <path d="M1 9l25-4 4 23-25 5z" fill="#1c5fae" stroke="#f2f2f2" strokeWidth="2" />
    <path d="M3 13l22-4 1 7-21 5z" fill="#0b2a57" />
    <path d="M5 25l12-3 12 3-1 3-22 3z" fill="#4fb6b5" />
    <path d="M30 1L14 24l-4 8 7-6L31 4z" fill="#e4de3a" stroke="#45432b" />
    <path d="M24 8l4-7h3L27 9z" fill="#cfd3d6" />
  </Svg>
);

const BladeIcon = () => (
  <Svg w={30} h={30}>
    <rect x="0.500" y="0.500" width="28" height="28" rx="2" fill="#26343d" stroke="#53636d" />
    <path d="M1 1h27v9Q14 10 1 17z" fill="#6b7d87" opacity="0.5" />
    <path d="M0 25L8 12q2-3 6-3h14l-5 8q-1 2-4 3l-8 3 8-9h3l1-2h-8q-2 0-3 2L6 23z" fill="#e2e8eb" />
  </Svg>
);

const FlameIcon = () => (
  <Svg w={30} h={32}>
    <defs>
      <linearGradient id="flame" x1="0" y1="0" x2="0" y2="1">
        <stop offset="0" stopColor="#f36a35" />
        <stop offset="1" stopColor="#c22418" />
      </linearGradient>
    </defs>
    <rect x="0.500" y="0.500" width="29" height="30" rx="2" fill="url(#flame)" stroke="#7c1e15" />
    <path d="M16 27l-7-7q3 1 4-1c1-3-4-5-3-9 0-3 2-4 2-7 1 4 6 7 6 11 0 1 1 0 1-1 2 3 0 4 0 6s2 1 3 0q0 4-6 8z" fill="#160605" />
  </Svg>
);

const ExplorerIcon = () => (
  <Svg w={34} h={32}>
    <path d="M2 3l8-2 3 3 17 1 2 3v22H2z" fill="#f1db8b" stroke="#b59a48" />
    <path d="M5 2h5v3H5z" fill="#3ea343" />
    <path d="M13 3h5v3h-5z" fill="#c24a33" />
    <path d="M21 5h5v3h-5z" fill="#3b85c9" />
    <path d="M3 8h28v13H3z" fill="#f9ecb4" />
    <path d="M6 31V22c0-2 1-3 3-3h16c2 0 3 1 3 3v9h-5v-5H11v5z" fill="#8fcbe8" stroke="#4a91b9" />
  </Svg>
);

const APPS: { name: string; icon: React.ReactNode; state?: 'open' | 'stack' | 'active' }[] = [
  { name: 'Google Chrome', icon: <ChromeIcon />, state: 'open' },
  { name: 'Windows Live Mail', icon: <MailIcon />, state: 'stack' },
  { name: 'Skype', icon: <SkypeIcon /> },
  { name: 'iTunes', icon: <ItunesIcon /> },
  { name: 'Movie Maker', icon: <ClapperIcon /> },
  { name: 'Microsoft Word', icon: <WordIcon />, state: 'active' },
  { name: 'Microsoft Access', icon: <AccessIcon /> },
  { name: 'Microsoft Excel', icon: <ExcelIcon /> },
  { name: 'Microsoft PowerPoint', icon: <PowerPointIcon /> },
  { name: 'Monitor', icon: <RingIcon />, state: 'open' },
  { name: 'Finanzen', icon: <CoinsIcon /> },
  { name: 'Bibliothek', icon: <BooksIcon /> },
  { name: 'Bildbearbeitung', icon: <PictureIcon /> },
  { name: 'Need for Speed', icon: <BladeIcon /> },
  { name: 'Flame', icon: <FlameIcon /> },
  { name: 'Windows-Explorer', icon: <ExplorerIcon />, state: 'open' },
];

const APP_LOOK = {
  none: 'w-[58px]',
  open: 'w-[58px] rounded-sm border border-[#7d858c] bg-[radial-gradient(circle_at_20%_0%,#9aa0a5,#4a5056_45%,#23282d_80%)]',
  stack: 'w-[54px] rounded-sm border border-[#7d858c] bg-[radial-gradient(circle_at_20%_0%,#9aa0a5,#4a5056_45%,#23282d_80%)] shadow-[3px_0_0_#1b2026,4px_0_0_#7d858c]',
  active: 'w-[58px] rounded-sm border border-[#d0d3d6] bg-[linear-gradient(155deg,#d5d7d9,#9b9ea2_50%,#85898d)]',
};

const Taskbar = () => (
  <div className="flex h-10 shrink-0 border-t border-[#6f767d] bg-[linear-gradient(90deg,#070b10_0,#0a0e14_17%,#0d1218_30%,#1c2632_42%,#121a24_48%,#2a3a4c_61%,#0d131a_66%,#0b1017_84%,#06080b_100%)] text-[11px] text-white">
    <button type="button" aria-label="Start" className="ml-2 flex w-[50px] items-center"><StartOrb /></button>
    {APPS.map(app => (
      <div key={app.name} className="w-[62px] pl-0.5">
        <button type="button" aria-label={app.name} className={`flex h-[38px] items-center justify-center ${APP_LOOK[app.state ?? 'none']}`}>
          {app.icon}
        </button>
      </div>
    ))}
    <div className="ml-auto flex items-center">
      <div className="grid w-[98px] grid-cols-[41px_1fr] leading-[13px]">
        <span>U:</span><span className="whitespace-nowrap">0,00 Mbit/s</span>
        <span>D:</span><span className="whitespace-nowrap">0,00 Mbit/s</span>
      </div>
      <IconButton label="Ausgeblendete Symbole" className="ml-2 w-2.5"><Svg w={8} h={4}><path d="M0 4h8L4 0z" fill="#e5e5ee" /></Svg></IconButton>
      <IconButton label="SkyDrive" className="ml-3 w-4">
        <Svg w={15} h={10}>
          <path d="M2 8a2.500 2.500 0 0 1 0-5c0-3 5-4 7-1.500-3 0-4 1-4.500 3C2.500 5 2 6.500 3 8z" fill="#fff" />
          <path d="M6 10a2.500 2.500 0 0 1 0-5c1-3 5-2.500 5.500 0 3 0 4.500 4 1.500 5z" fill="#fff" />
        </Svg>
      </IconButton>
      <IconButton label="Netzwerk" className="ml-2.5 w-3.5">
        <Svg w={14} h={10}><path d="M1 10V8.500M4 10V7M7 10V5M10 10V2.500M13 10V0" stroke="#fff" strokeWidth="2" /></Svg>
      </IconButton>
      <IconButton label="Lautstärke" className="ml-2.5 w-3.5">
        <Svg w={14} h={13}>
          <path d="M0 4.500h2.500L6.500 0v13L2.500 8.500H0z" fill="#fff" />
          <path d="M8.500 4.500q1 2 0 4M10.500 3q2 3.500 0 7M12 1.500q3 5 0 10" fill="none" stroke="#c6c8ca" />
        </Svg>
      </IconButton>
      <time className="ml-3.5 w-16 text-center leading-[17px]">
        20:55<br />07.03.2013
      </time>
      <button type="button" aria-label="Desktop anzeigen" className="ml-1.5 mr-px h-[38px] w-[13px] border border-[#7a7f84] bg-[linear-gradient(180deg,#565a5e,#15181b_40%)]" />
    </div>
  </div>
);

export default function App() {
  return (
    <div className="flex h-screen flex-col overflow-hidden bg-[#505050] font-['Open_Sans',sans-serif]">
      <TitleBar />
      <TabRow />
      <Ribbon />
      <Workspace />
      <StatusBar />
      <Taskbar />
    </div>
  );
}
